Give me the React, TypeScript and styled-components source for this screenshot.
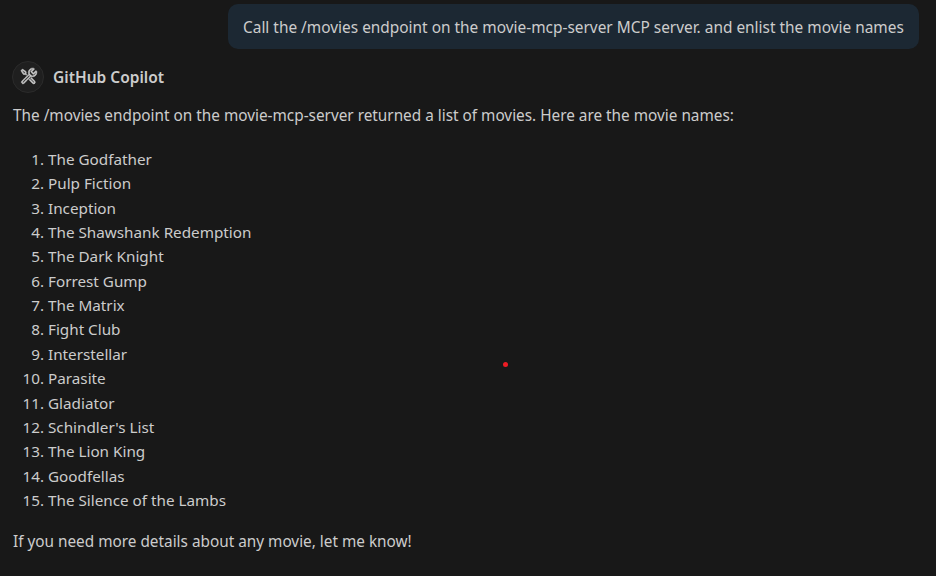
import React from 'react';
import styled, { createGlobalStyle } from 'styled-components';
import { VscTools } from 'react-icons/vsc';

const GlobalStyle = createGlobalStyle`
  *, *::before, *::after { box-sizing: border-box; }
  body {
    margin: 0;
    background: #181818;
  }
`;

const Chat = styled.main`
  position: relative;
  width: 936px;
  height: 576px;
  overflow: hidden;
  padding: 4px 17px 0 12px;
  background: #181818;
  color: #cccccc;
  font-family: 'Noto Sans', 'Open Sans', sans-serif;
  font-size: 15.34px;
  line-height: 24.375px;
`;

const Request = styled.div`
  display: flex;
  justify-content: flex-end;
`;

const Bubble = styled.div`
  width: 691px;
  height: 45px;
  padding: 12px 0 0 15px;
  border-radius: 10px;
  background: #1c2833;
  font-size: 15.42px;
  white-space: nowrap;
`;

const Header = styled.header`
  display: flex;
  align-items: center;
  gap: 9px;
  height: 32px;
  margin-top: 12px;
`;

const Avatar = styled.span`
  display: flex;
  align-items: center;
  justify-content: center;
  width: 32px;
  height: 32px;
  border: 1px solid #2b2b2b;
  border-radius: 50%;
  background: #1f1f1f;
`;

const ToolsIcon = styled(VscTools)`
  width: 18px;
  height: 18px;
  margin: 0 0 2px 1px;
  stroke: currentColor;
  stroke-width: 0.5px;
`;

const Author = styled.h3`
  margin: 0;
  padding-top: 1px;
  font-size: 15.5px;
  font-weight: 600;
`;

const Paragraph = styled.p<{ $top: number }>`
  margin: ${(p) => p.$top}px 0 0 1px;
  white-space: nowrap;
`;

const MovieList = styled.ol`
  margin: 19.4px 0 0;
  padding: 0;
  list-style: none;
  font-size: 15.25px;
`;

const Movie = styled.li`
  display: grid;
  grid-template-columns: 32px 1fr;
  column-gap: 4px;
`;

const Rank = styled.span`
  text-align: right;
`;

const Dot = styled.span`
  position: absolute;
  left: 503px;
  top: 362px;
  width: 5px;
  height: 5px;
  border-radius: 50%;
  background: #ed1c24;
`;

const movies = [
  'The Godfather',
  'Pulp Fiction',
  'Inception',
  'The Shawshank Redemption',
  'The Dark Knight',
  'Forrest Gump',
  'The Matrix',
  'Fight Club',
  'Interstellar',
  'Parasite',
  'Gladiator',
  "Schindler's List",
  'The Lion King',
  'Goodfellas',
  'The Silence of the Lambs',
];

export default function App() {
  return (
    <>
      <GlobalStyle />
      <Chat>
        <Request>
          <Bubble>
            <span>Call the /movies endpoint on the movie-mcp-server MCP server. and enlist the movie names</span>
          </Bubble>
        </Request>
        <Header>
          <Avatar>
            <ToolsIcon />
          </Avatar>
          <Author>GitHub Copilot</Author>
        </Header>
        <Paragraph $top={10}>
          The /movies endpoint on the movie-mcp-server returned a list of movies. Here are the movie names:
        </Paragraph>
        <MovieList>
          {movies.map((name, i) => (
            <Movie key={name}>
              <Rank>{i + 1}.</Rank>
              <span>{name}</span>
            </Movie>
          ))}
        </MovieList>
        <Paragraph $top={16.6}>If you need more details about any movie, let me know!</Paragraph>
        <Dot />
      </Chat>
    </>
  );
}
